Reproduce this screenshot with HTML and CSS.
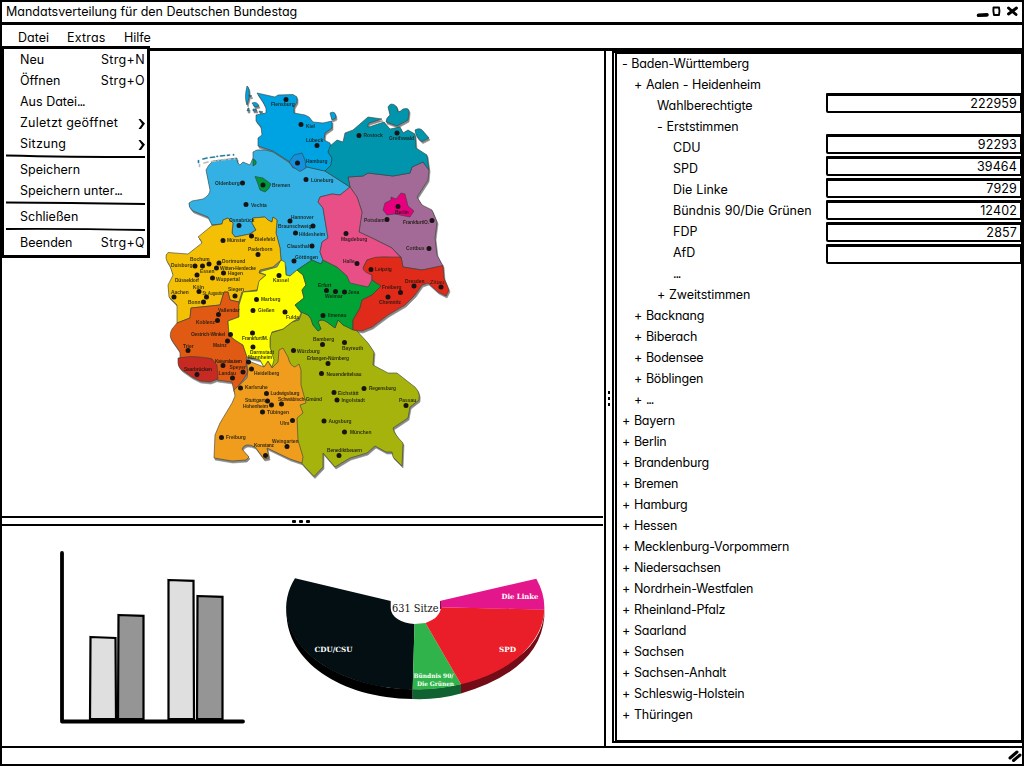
FILE: index.html
```html
<!DOCTYPE html>
<html lang="de">
<head>
<meta charset="utf-8">
<title>Mandatsverteilung für den Deutschen Bundestag</title>
<link rel="stylesheet" href="styles.css">
</head>
<body>
<div class="window">
  <header class="titlebar">
    <h1>Mandatsverteilung für den Deutschen Bundestag</h1>
    <svg class="controls" width="46" height="20" viewBox="975 2 46 20"><path d="M977.500 15.300l8.500-.4" stroke-width="3.600"/><path d="M992.500 7.500h5.500q1 4 0 7.500h-5q-1-4-.5-7.500z" stroke-width="1.900"/><path d="M1007.500 8l7.500 6.500m.5-6.500l-8 6" stroke-width="2.900"/></svg>
  </header>
  <nav class="menubar">
    <span class="m1">Datei</span><span class="m2">Extras</span><span class="m3">Hilfe</span>
    <div class="dropdown">
      <div class="item"><span>Neu</span><span>Strg+N</span></div>
      <div class="item"><span>Öffnen</span><span>Strg+O</span></div>
      <div class="item"><span>Aus Datei<b>...</b></span></div>
      <div class="item wide"><span>Zuletzt geöffnet</span><svg width="7" height="10" viewBox="0 0 7 10"><path d="M.5 0L2.500 0 7 4.500 3 10H.5L4 5z"/></svg></div>
      <div class="item wide"><span>Sitzung</span><svg width="7" height="10" viewBox="0 0 7 10"><path d="M.5 0L2.500 0 7 4.500 3 10H.5L4 5z"/></svg></div>
      <svg class="sep" width="140" height="5" viewBox="0 0 140 5"><path d="M0 1.500q60 1.500 139 1.500"/></svg>
      <div class="item"><span>Speichern</span></div>
      <div class="item"><span>Speichern unter<b>...</b></span></div>
      <svg class="sep" width="140" height="5" viewBox="0 0 140 5"><path d="M0 1.500q60 .3 139 1.500"/></svg>
      <div class="item"><span>Schließen</span></div>
      <svg class="sep" width="140" height="5" viewBox="0 0 140 5"><path d="M0 2q60-.5 139 1"/></svg>
      <div class="item"><span>Beenden</span><span>Strg+Q</span></div>
    </div>
  </nav>
  <main class="content">
    <section class="left">
      <div class="map-pane">
        <svg class="map" width="300" height="400" viewBox="160 80 300 400">
          <g class="land">
            <path fill="#33b1e4" d="M257 150Q266 149 273 152L290 163 293 168 307 167 325 171 350 187 340 195 332 194 320 197 318 202 323 208 328 238 322 242 320 252 323 260 321 264 312 260 300 268 295 272 290 276 286 275 286 267 281 260 280 248 276 233 277 220 273 217 272 222Q268 221 265 217L253 218 252 223 256 230 250 234 235 237 232 233 233 223 228 218 223 220 222 224 212 225 208 217 193 211Q188 207 189 203L192 201 203 199Q210 195 210 190L206 170Q208 165 213 161L237 158Q237 164 240 165L243 162 250 165 253 158 253 152Z"/>
            <path fill="#00a3e2" d="M257 93L275 97 278 95 293 94.500 297 97 297 102 294 107 294 113 305 115 309 117 313 122 323 123 332 121 332 128 325 133 324 140 330 143 331 148 328 152 332 158 331 165 325 171 307 167 290 162 273 151 258 146 258 138 262 135 261 127 256 121 256 115 266 113 266 108 263 102Z"/>
            <path fill="#f3c006" d="M212 225.500L198 237Q200 238 202 243L188 254 168 252.500Q163 257 170 266L173 275 168 285 169 297 177 305 177 323 190 318 191 308 220 305 224 292 228 292 230 300 239 302 242 292 257 290 260 280 266 275 259 273 260 270 273 267 281 260 280 248 276 233 277 220 273 217 272 222Q268 221 265 217L253 218 252 223 256 230 250 234 235 237 232 233 233 223 228 218 223 220 222 224Z"/>
            <path fill="#a6b30c" d="M270 338Q270 332 274 332L283 329 292 322 299 320 302 312 308 315Q311 317 313 325L318 331 321 329 318 322Q322 318 327 322L335 328 338 320 343 325 357 331 368 343 374 352 373 365 388 373 397 373 411 384Q421 390 419 400L410 407 408 418 393 428Q394 434 403 443L402 466 393 457 392 452 386 452 375 446 367 453 350 458 335 467 323 453 323 467 314 476.500 305 467 295 455 270 380Z"/>
            <path fill="#e05a14" d="M177 323L190 318 191 308 220 305 224 292 228 292 230 300 239 302 239 317 228 321 229 335 235 340 243 345 247 357 246 365 248 372 243 380 234 391.500 232 382 217 380 212 359 180 358 180 352 173 342Q168 336 172 329Z"/>
            <path fill="#c72a22" d="M178 358L190 356.500Q206 357 212 359L217 365 218 379 210 382 200 381 192 377 182 370Q178 367 178 363Z"/>
            <path fill="#f09c1c" d="M234 390L247 378 248 370 246 360 264 367 268 361 272 368 278 362 279 350 283 348 288 357Q290 366 295 367L299 364 301 370 301 385 306 403 300 405 303 413 297 418 298 440 303 457 302 463 290 459 267 448 269 458 264 459 255 447Q245 442 242 449L249 457 246 460 232 461 214 458 215 435 220 423 232 403 235 396Z"/>
            <path fill="#ff0" d="M259 272L266 275 259 281 257 291 243 292 239 305 239 317 228 321 229 335 235 340 243 345 247 357 260 360 264 367 268 361 272 367 274 360 270 347 270 338 272 332 283 329 292 322 299 318 301 313 295 305 304 298 302 290 306 285 303 275 297 270 290 276 286 275 285 262 281 260 277 267Z"/>
            <path fill="#00a334" d="M297 270L312 260 321 264 323 260 337 267 347 276 363 285 372 280 381 286 372 295 362 300 360 308 353 320 353 330 343 325 338 320 335 328 327 322Q320 318 318 322L321 329 318 331 313 325Q311 317 308 315L301 312 295 305 304 298 302 290 306 285 303 275Z"/>
            <path fill="#a36a97" d="M348 177L363 176 368 173 393 176 410 173 412 167 423 162 429 170 428 180 417 197 422 205 432 210 437 222 435 238 437 255 443 266 422 270 403 267 401 257 392 248 372 238 359 232 362 212 357 197 350 187Z"/>
            <path fill="#e94f87" d="M350 187L357 197 362 212 359 232 372 238 392 248 401 258 383 257 367 260 363 268 372 275 372 280 368 287 350 283 347 276 337 267 323 260 320 252 322 242 328 238 323 208 318 202 320 197 332 194 340 195Z"/>
            <path fill="#e02a1a" d="M367 260Q376 256 383 257L401 257 403 267 422 270 443 265.500 444 278 449 290 446 296 438 292 428 283 422 285 415 295 405 305 388 315 372 327 362 331 353 330 353 320 360 308 362 300 372 295 381 286 372 280 372 275Q363 272 363 268Z"/>
            <path fill="#0095ad" d="M325 171L331 165 332 158 328 152 330 146 337 140 343 142 345 133 353 130 368 117 382 119 369 123Q365 129 372 126L384 122 390 129 400 127 403 133 408 130 415 134 416 148 427 155 429 170 423 162 412 167 410 173 393 176 368 173 363 176 348 177 350 187Z"/>
            <path fill="#0095ad" d="M388 107Q391 101 397 107L398 112Q400 112 403 109 410 107 409 113L408 120 397 126 386 122Q386 118 390 115ZM415 130Q420 127 423 131L429 138 422 141.500Q416 138 415 130Z"/>
            <path fill="#1490dd" d="M289 162L294 155 302 153 305 160 306 168 300 171.500 293 167Z"/>
            <path fill="#00983e" d="M255 176.500L263 178 271 184Q269 190 265 192L260 190 258 184ZM253 159Q257 160 256 164L253 166Z"/>
            <path fill="#e6007e" d="M385 203L391 200 391 197 396 199 401 193 405 194 408 206 414 211 410 217 395 214 387 215 383 210Z"/>
            <path fill="#00a3e2" d="M247 86Q250 87 249 98L247 105Q244 98 247 86ZM252 103Q257 101 259 106L255 107ZM330 113Q336 110 336 118L332 120ZM253 109l3 0 1 2-4 0zM259 111l4 1-3 1zM248 108l1 0 0 3-2 0zM249 95l3 1-2 1z"/>
          </g>
          <path class="isles" d="M198.500 160.500v2M203 159l4-1M210.500 157.500l4-.5M217 156.300h.5M220.500 156l4-.5M227.500 155.300l2-.3M233.500 154.500v.5"/>
          <path class="dot" d="M286 99.500h0M301 124.500h0M317 145.500h0M297.500 163h0M306 179.500h0M242.500 183h0M263 185h0M246 204.500h0M359 135.500h0M397 133h0M398 206.500h0M387 219.500h0M432 220.500h0M429 248.500h0M346 233.500h0M357 263.500h0M371 269.500h0M290 221h0M313 226h0M295.500 233h0M312 246h0M294 261h0M239 225.500h0M223 240.500h0M251.500 236h0M258 254.500h0M195 266h0M202.500 266h0M209 264h0M219 263h0M216.500 268h0M223.500 273h0M212.500 278h0M197 275h0M174 297h0M199 291.500h0M206.500 297h0M203.500 302h0M235 296h0M279 275.500h0M256.500 299.500h0M253 310.500h0M285 312h0M252.500 333h0M218.500 314.500h0M217.500 320.500h0M230.500 334.500h0M227.500 341h0M188 350.500h0M253 347h0M248.500 362h0M251.500 369h0M243 372h0M223 365.500h0M232.500 378h0M197 374.500h0M326.500 290.500h0M335.500 291.500h0M344.500 292h0M323 315.500h0M400.500 292.500h0M414 286h0M388 297h0M441 287h0M322.500 344.500h0M344.500 342.500h0M293.500 350.500h0M328 363.500h0M321.500 373.500h0M364 388.500h0M334 392.500h0M337 400h0M406 405.500h0M324 421h0M344.500 432h0M339 455.500h0M240.500 388h0M266.500 393.500h0M267.500 401h0M271.500 405h0M281.500 404h0M262.500 412h0M292.500 420.500h0M221.500 437.500h0M287 446.500h0M265.500 455.500h0"/>
          <g class="city">
            <text x="271" y="106">Flensburg</text><text x="306" y="127.500">Kiel</text><text x="306" y="142">Lübeck</text><text x="306" y="163">Hamburg</text><text x="311" y="181.500">Lüneburg</text><text x="215" y="184.500">Oldenburg</text><text x="272" y="187">Bremen</text><text x="251" y="206.500">Vechta</text><text x="363.500" y="137">Rostock</text><text x="389" y="139.500">Greifswald</text><text x="395" y="214">Berlin</text><text x="364" y="221.500">Potsdam</text><text x="403" y="224" textLength="26">Frankfurt/O.</text><text x="406" y="250">Cottbus</text><text x="341" y="240.500">Magdeburg</text><text x="343" y="263">Halle</text><text x="375" y="271">Leipzig</text><text x="291" y="218.500">Hannover</text><text x="278" y="227.500">Braunschweig</text><text x="299" y="236">Hildesheim</text><text x="287" y="248">Clausthal</text><text x="295" y="259">Göttingen</text><text x="229" y="221.500">Osnabrück</text><text x="227" y="242">Münster</text><text x="254.500" y="241">Bielefeld</text><text x="248" y="251">Paderborn</text><text x="190" y="261">Bochum</text><text x="171" y="267">Duisburg</text><text x="222" y="262.500">Dortmund</text><text x="220" y="269.500" textLength="36">Witten-Herdecke</text><text x="200" y="273">Essen</text><text x="228" y="275">Hagen</text><text x="175" y="282" textLength="24">Düsseldorf</text><text x="216" y="280.500">Wuppertal</text><text x="193" y="288.500">Köln</text><text x="171" y="294">Aachen</text><text class="tight" x="202.500" y="294.500" textLength="21" lengthAdjust="spacingAndGlyphs">St. Augustin</text><text x="188" y="303.500">Bonn</text><text x="228" y="291">Siegen</text><text x="273" y="282">Kassel</text><text x="261" y="301">Marburg</text><text x="258" y="312">Gießen</text><text x="286" y="318.500">Fulda</text><text x="242" y="339.500" textLength="26">Frankfurt/M.</text><text x="218" y="312">Vallendar</text><text x="196" y="324">Koblenz</text><text x="191" y="336" textLength="34">Oestrich-Winkel</text><text x="213" y="347">Mainz</text><text x="183" y="347.500">Trier</text><text x="250" y="353.500">Darmstadt</text><text x="248" y="359">Mannheim</text><text x="254" y="374.500">Heidelberg</text><text x="229.500" y="369">Speyer</text><text x="215" y="362.500" textLength="27">Kaiserslautern</text><text x="218.500" y="375">Landau</text><text x="184" y="371" textLength="28">Saarbrücken</text><text x="318" y="287">Erfurt</text><text x="325" y="298">Weimar</text><text x="348" y="294">Jena</text><text x="328" y="317">Ilmenau</text><text x="382" y="289">Freiberg</text><text x="405" y="283">Dresden</text><text x="379" y="303.500">Chemnitz</text><text class="zittau" x="430" y="283.500">Zittau</text><text x="313" y="340.500">Bamberg</text><text x="342" y="349.500">Bayreuth</text><text x="297" y="352.500">Würzburg</text><text x="307" y="360" textLength="42">Erlangen-Nürnberg</text><text x="326.500" y="376" textLength="35">Neuendettelsau</text><text x="369" y="390" textLength="27">Regensburg</text><text x="338" y="394.500">Eichstätt</text><text x="341.500" y="402">Ingolstadt</text><text x="399" y="402">Passau</text><text x="328.500" y="422.500">Augsburg</text><text x="350" y="434">München</text><text x="327" y="451.500" textLength="35">Benediktbeuern</text><text x="245" y="388.500">Karlsruhe</text><text x="270.500" y="394.500" textLength="29">Ludwigsburg</text><text x="245" y="401.500" textLength="20">Stuttgart</text><text x="278" y="401" textLength="44">Schwäbisch-Gmünd</text><text x="243" y="408" textLength="25">Hohenheim</text><text x="267" y="413.500">Tübingen</text><text x="280" y="424.500">Ulm</text><text x="226" y="438.500">Freiburg</text><text x="254" y="447" textLength="20">Konstanz</text><text x="272" y="443">Weingarten</text>
          </g>
        </svg>
      </div>
      <div class="hsplit"><i></i><i></i><i></i></div>
      <div class="charts">
        <svg class="bars" width="190" height="180" viewBox="58 548 190 180">
          <path class="axis" d="M62 553V721.500H243"/>
          <path fill="#dfdfdf" d="M90.500 637l25 1 .5 81H90z"/><path fill="#959595" d="M118.500 615l25 .8V719h-25.500z"/>
          <path fill="#dfdfdf" d="M168.500 580l25 .8.500 138.200h-25.500z"/><path fill="#959595" d="M197.500 596l25 .8V719h-25.500z"/>
        </svg>
        <svg class="pie" width="270" height="130" viewBox="280 573 270 130">
          <path fill="#000" d="M286.500 608A129 81.500 0 0 0 412.700 689.300V699C340 698 286.500 661 286.500 612Z"/>
          <path fill="#116231" d="M412.700 689Q438 690 461 684V693.500Q438 700 412.700 699Z"/>
          <path fill="#730c16" d="M461 682Q544 660 544.300 609V617Q540 670 461 693.500Z"/>
          <path fill="#750d45" d="M440 601h2v8h-2z"/>
          <path fill="#030f13" d="M295 578.300L390.700 601V608A25.500 16 0 0 0 414.500 624L412.700 689.500A129 81.500 0 0 1 295 578.300Z"/>
          <path fill="#2fb34a" d="M414.500 624L425.500 623 461 684.300A129 81.500 0 0 1 412.700 689.500Z"/>
          <path fill="#e91e29" d="M425.500 623Q440 618 441 607.300L544.300 609.500A129 81.500 0 0 1 461 684.300Z"/>
          <path fill="#e3178b" d="M440.700 600.700L536.300 578.700Q545 594 544.300 609.700L441 607.300Z"/>
          <text x="392" y="611.500" class="total" textLength="46.500" lengthAdjust="spacingAndGlyphs">631 Sitze</text>
          <text x="314.500" y="651.500" textLength="38" lengthAdjust="spacingAndGlyphs">CDU/CSU</text><text x="499" y="651.500" textLength="17" lengthAdjust="spacingAndGlyphs">SPD</text><text x="501.500" y="599" textLength="37" lengthAdjust="spacingAndGlyphs">Die Linke</text>
          <text class="green" x="413.500" y="678" textLength="40" lengthAdjust="spacingAndGlyphs">Bündnis 90/</text><text class="green" x="417" y="686" textLength="37" lengthAdjust="spacingAndGlyphs">Die Grünen</text>
        </svg>
      </div>
    </section>
    <div class="vsplit"><i></i><i></i><i></i></div>
    <section class="tree-panel">
      <ul class="tree">
        <li>- Baden-Württemberg</li>
        <li class="l1">+ Aalen - Heidenheim</li>
        <li class="l2">Wahlberechtigte</li>
        <li class="l2">- Erststimmen</li>
        <li class="l3">CDU</li><li class="l3">SPD</li><li class="l3">Die Linke</li><li class="l3">Bündnis 90/Die Grünen</li><li class="l3">FDP</li><li class="l3">AfD</li><li class="l3"><b>...</b></li>
        <li class="l2">+ Zweitstimmen</li>
        <li class="l1">+ Backnang</li><li class="l1">+ Biberach</li><li class="l1">+ Bodensee</li><li class="l1">+ Böblingen</li><li class="l1">+ <b>...</b></li>
        <li>+ Bayern</li><li>+ Berlin</li><li>+ Brandenburg</li><li>+ Bremen</li><li>+ Hamburg</li><li>+ Hessen</li><li>+ Mecklenburg-Vorpommern</li><li>+ Niedersachsen</li><li>+ Nordrhein-Westfalen</li><li>+ Rheinland-Pfalz</li><li>+ Saarland</li><li>+ Sachsen</li><li>+ Sachsen-Anhalt</li><li>+ Schleswig-Holstein</li><li>+ Thüringen</li>
      </ul>
      <div class="fields">
        <div class="field first">222959</div>
        <div class="field">92293</div><div class="field">39464</div><div class="field">7929</div><div class="field">12402</div><div class="field">2857</div><div class="field"></div>
      </div>
    </section>
  </main>
  <footer class="status"><svg width="14" height="12" viewBox="0 0 14 12"><path d="M2 8L9 2M5.500 10.500L12 5" stroke-width="3"/></svg></footer>
</div>
</body>
</html>
```
FILE: styles.css
```css
* { box-sizing: border-box; }
body { margin: 0; background: #fff; color: #000; font: 12.500px/21px Inter, "Open Sans", sans-serif; font-feature-settings: "cv11" 1, "calt" 0; }
b { font-weight: 400; letter-spacing: -1.200px; }
.window { width: 1024px; height: 766px; display: flex; flex-direction: column; border: 2px solid #000; overflow: hidden; }
.titlebar { height: 23px; flex: none; border-bottom: 3px solid #000; display: flex; justify-content: space-between; }
h1 { margin: 0 0 0 4px; font-size: 12.500px; font-weight: 400; line-height: 19px; }
.controls { fill: none; stroke: #000; stroke-linecap: round; stroke-linejoin: round; }
.menubar { position: relative; height: 26px; flex: none; border-bottom: 3px solid #000; display: flex; line-height: 26px; padding-left: 16px; }
.m1 { width: 49px; }
.m2 { width: 57px; letter-spacing: .2px; }
.dropdown { position: absolute; left: 0; top: 21px; width: 148px; height: 212px; background: #fff; border: 3px solid #000; border-left-width: 2px; padding: 0 1px 0 2px; line-height: 21px; z-index: 2; }
.item { height: 21px; display: flex; justify-content: space-between; align-items: center; padding: 0 1px 0 14px; }
.item span + span { letter-spacing: .35px; }
.item svg { margin-top: 2px; }
.wide { letter-spacing: .25px; }
.sep { display: block; fill: none; stroke: #000; stroke-width: 1.8; }
.content { flex: 1; display: flex; min-height: 0; }
.left { width: 604px; border-right: 2px solid #000; display: flex; flex-direction: column; }
.map-pane { height: 465px; flex: none; padding: 29px 0 0 158px; }
.map { display: block; font: bold 4.900px "Liberation Sans", Arial, sans-serif; }
.land { stroke: #35403b; stroke-width: .6; stroke-linejoin: round; filter: drop-shadow(1.500px 2.800px .7px #888); }
.isles { fill: none; stroke: #247f9d; stroke-width: 1.7; stroke-linecap: round; filter: drop-shadow(1px 4px .3px #bbb); }
.dot { stroke: #181414; stroke-width: 5; stroke-linecap: round; fill: none; }
.city { fill: #17170f; opacity: .85; }
.zittau { font-size: 5.800px; font-weight: 400; }
.tight { font-size: 4.500px; }
.hsplit { height: 10px; width: 601px; flex: none; border: solid #000; border-width: 2px 0; display: flex; justify-content: center; align-items: center; gap: 3px; padding-right: 4px; }
.hsplit i { width: 4px; height: 3px; background: #000; border-radius: 1px; }
.charts { flex: 1; display: flex; }
.bars { margin: 22px 0 0 56px; stroke: #000; stroke-width: 2.2; }
.axis { fill: none; stroke-width: 3.8; stroke-linecap: round; stroke-linejoin: round; }
.pie { margin: 47px 0 0 32px; font: bold 7.200px "DejaVu Serif", serif; fill: #fff; }
.total { font: 11.500px "DejaVu Serif", serif; fill: #111; }
.green { font-size: 6.200px; }
.vsplit { width: 6px; display: flex; flex-direction: column; justify-content: center; align-items: center; gap: 3px; }
.vsplit i { width: 2px; height: 3px; background: #000; }
.tree-panel { flex: 1; border: 3px solid #000; border-left: 5px double #000; border-right-width: 1px; display: flex; justify-content: space-between; margin-bottom: 3px; }
.tree { list-style: none; margin: -1px 0 0; padding: 0 0 0 5px; white-space: nowrap; letter-spacing: -.2px; word-spacing: .5px; }
.tree li { height: 21px; }
.tree .l1 { padding-left: 12px; }
.tree .l2 { padding-left: 35px; letter-spacing: -.1px; }
.tree .l3 { padding-left: 51px; letter-spacing: 0; }
.fields { width: 195px; padding-top: 39px; display: flex; flex-direction: column; gap: 2px; }
.field { height: 20px; border: 3px solid #000; border-right-width: 1px; border-bottom-width: 2px; border-left-width: 2px; text-align: right; line-height: 16px; padding-right: 3px; border-radius: 1px 0 0 2px; letter-spacing: .15px; }
.first { margin-bottom: 19px; }
.status { height: 18px; flex: none; border-top: 2px solid #000; display: flex; justify-content: flex-end; align-items: center; }
.status svg { stroke: #000; stroke-linecap: round; }
```
